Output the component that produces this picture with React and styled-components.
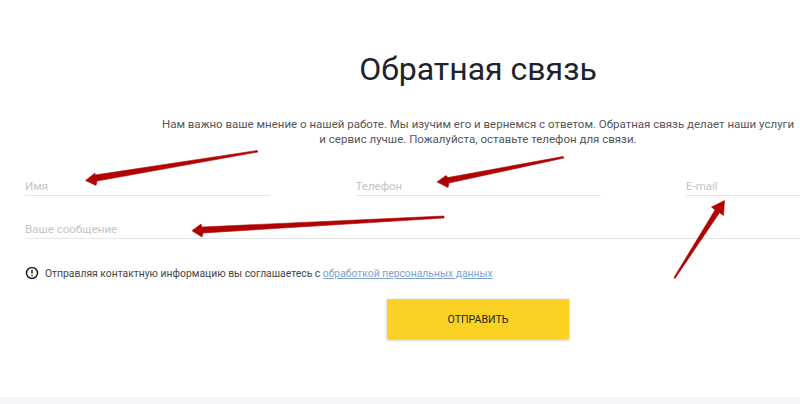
import React from 'react';
import styled, { createGlobalStyle } from 'styled-components';

const Global = createGlobalStyle`
  html, body { margin: 0; padding: 0; background: #fff; width: 800px; height: 404px; overflow: hidden; }
  #root { width: 800px; height: 404px; }
`;

const Page = styled.div`
  position: relative;
  width: 800px;
  height: 404px;
  overflow: hidden;
  font-family: Roboto, "Liberation Sans", sans-serif;
  display: flex;
  flex-direction: column;
`;

const Content = styled.main`
  flex: 1;
  width: 906px;
  margin-left: 25px;
  display: flex;
  flex-direction: column;
  align-items: center;
`;

const Title = styled.h1`
  margin: 48px 0 0;
  font-size: 32px;
  line-height: 42px;
  font-weight: 400;
  color: #22222c;
`;

const Lead = styled.p`
  margin: 27px 0 0;
  width: 640px;
  font-size: 11.5px;
  line-height: 15px;
  text-align: center;
  color: #55555a;
`;

const Row = styled.div`
  align-self: stretch;
  margin-top: ${(p) => p.$top}px;
  display: grid;
  grid-template-columns: ${(p) => p.$columns};
  column-gap: 85.5px;
`;

const Field = styled.input`
  display: block;
  width: 100%;
  box-sizing: border-box;
  height: 25px;
  padding: 6px 0 0;
  border: 0;
  border-bottom: 1px solid #e5e5e5;
  outline: none;
  background: transparent;
  font: 400 11.5px Roboto, "Liberation Sans", sans-serif;
  color: #333;
  &::placeholder { color: #c4c4c4; opacity: 1; }
`;

const Notice = styled.div`
  align-self: stretch;
  margin-top: 25px;
  display: flex;
  align-items: center;
  gap: 6px;
  height: 18px;
  font-size: 10.35px;
  color: #444448;
`;

const Policy = styled.a`
  color: #7ba2d4;
  text-decoration: underline;
`;

const Submit = styled.button`
  margin-top: 17px;
  width: 182px;
  height: 40px;
  border: 0;
  border-radius: 1px;
  background: #fbd224;
  box-shadow: 0 1px 3px rgba(0, 0, 0, 0.28);
  font: 400 10.6px Roboto, "Liberation Sans", sans-serif;
  color: #26261c;
`;

const FooterStrip = styled.div`
  height: 7px;
  flex: none;
  background: #f5f5fa;
`;

const Arrows = styled.svg`
  position: absolute;
  left: 0;
  top: 0;
  width: 800px;
  height: 404px;
  pointer-events: none;
`;

const arrows = [
  'M257 150.5 L95 175 L95 173 L85.5 180.5 L96 185.5 L97 181 L258 152 Z',
  'M563 156.5 L448 177.5 L446 175.5 L437 182 L448 187.5 L449 183 L564 158 Z',
  'M444 216 L202 227 L201 224 L192 230.7 L202 237 L203 233 L444 218 Z',
  'M674 277.5 L715 210 L711.5 207 L724.5 200.5 L723.5 215.5 L719.5 212.7 L675 278.5 Z',
];

export default function App() {
  return (
    <Page>
      <Global />
      <Content>
        <Title>Обратная связь</Title>
        <Lead>
          Нам важно ваше мнение о нашей работе. Мы изучим его и вернемся с ответом. Обратная связь делает наши услуги и сервис лучше. Пожалуйста, оставьте телефон для связи.
        </Lead>
        <Row $top={24} $columns="245px 245px 245px">
          <Field placeholder="Имя" />
          <Field placeholder="Телефон" />
          <Field placeholder="E-mail" />
        </Row>
        <Row $top={18} $columns="1fr">
          <Field placeholder="Ваше сообщение" />
        </Row>
        <Notice>
          <svg width="14" height="14" viewBox="0 0 14 14" fill="none">
            <circle cx="7" cy="7" r="5.5" stroke="#222" strokeWidth="1.5" />
            <path d="M7 3.8v3.8" stroke="#222" strokeWidth="1.5" />
            <path d="M7 8.8v1.4" stroke="#222" strokeWidth="1.5" />
          </svg>
          <span>
            Отправляя контактную информацию вы соглашаетесь с <Policy href="#">обработкой персональных данных</Policy>
          </span>
        </Notice>
        <Submit type="button">ОТПРАВИТЬ</Submit>
      </Content>
      <FooterStrip />
      <Arrows viewBox="0 0 800 404">
        {arrows.map((d) => (
          <path key={d} d={d} fill="#b00404" stroke="#b00404" strokeWidth="0.6" strokeLinejoin="round" />
        ))}
      </Arrows>
    </Page>
  );
}
